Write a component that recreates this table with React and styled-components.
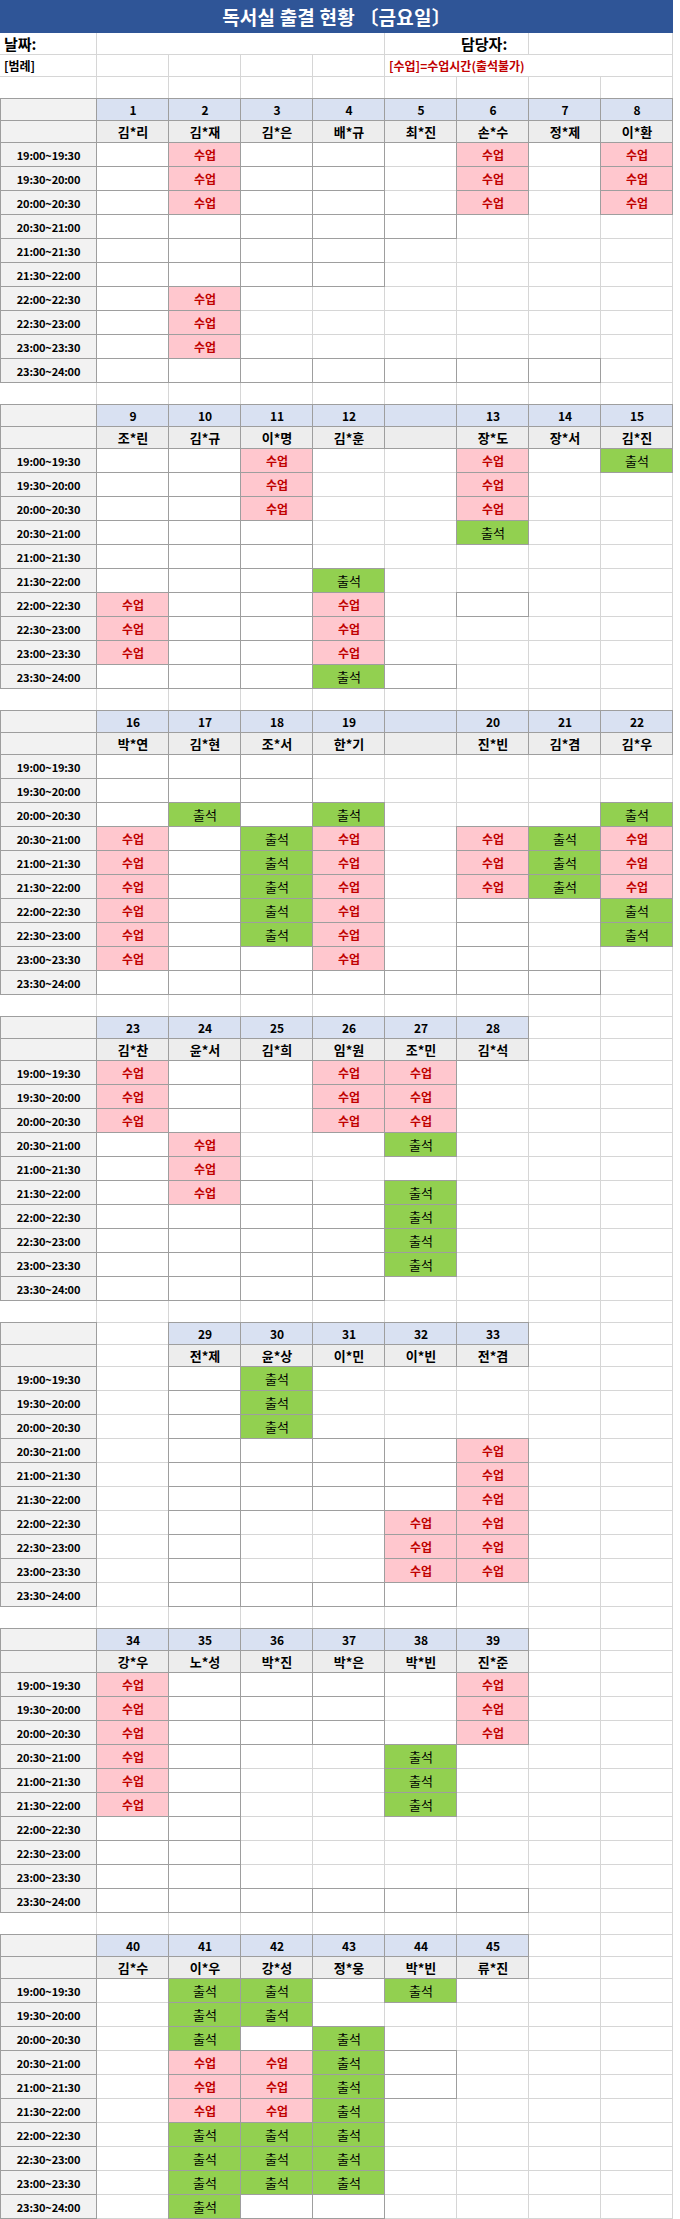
import React from "react";
import styled, { createGlobalStyle } from "styled-components";

const GRID = "#d6d6d6";
const LINE = "#9e9e9e";

const FILLS = {
  white: "#ffffff",
  gray: "#f2f2f2",
  name: "#ededed",
  blue: "#d9e1f2",
  pink: "#ffc7ce",
  green: "#92d050",
};

const TIMES = [
  "19:00~19:30",
  "19:30~20:00",
  "20:00~20:30",
  "20:30~21:00",
  "21:00~21:30",
  "21:30~22:00",
  "22:00~22:30",
  "22:30~23:00",
  "23:00~23:30",
  "23:30~24:00",
];

// rows: . = empty, b = empty with border, s = 수업, c = 출석
const BLOCKS = [
  {
    seats: [[1, "김*리"], [2, "김*재"], [3, "김*은"], [4, "배*규"], [5, "최*진"], [6, "손*수"], [7, "정*제"], [8, "이*환"]],
    rows: ["bsbb.s.s", "bsbb.s.s", "bsbb.s.s", "bbbbb...", "bbbb....", "bbbb....", "bs......", "bs......", "bs......", "bbbbbbb."],
  },
  {
    seats: [[9, "조*린"], [10, "김*규"], [11, "이*명"], [12, "김*훈"], "", [13, "장*도"], [14, "장*서"], [15, "김*진"]],
    rows: ["bbs..s.c", "bbs..s..", "bbs..s..", "bbb..c..", "bbb.....", "bbbc....", "sbbs.b..", "sbbs....", "sbbs....", "bbbcb..."],
  },
  {
    seats: [[16, "박*연"], [17, "김*현"], [18, "조*서"], [19, "한*기"], "", [20, "진*빈"], [21, "김*겸"], [22, "김*우"]],
    rows: ["bbb.....", "bbb.....", "bcbc...c", "sbcs.scs", "sbcs.scs", "sbcs.scs", "sbcs.b.c", "sbcs.b.c", "sbbs.b..", "bbbbbbb."],
  },
  {
    seats: [[23, "김*찬"], [24, "윤*서"], [25, "김*희"], [26, "임*원"], [27, "조*민"], [28, "김*석"], null, null],
    rows: ["sb.ss...", "sb.ss...", "sb.ss...", "bs..c...", "bs......", "bsb.c...", "bbbbc...", "bbbbc...", "bbbbc...", "bbbb...."],
  },
  {
    seats: [null, [29, "전*제"], [30, "윤*상"], [31, "이*민"], [32, "이*빈"], [33, "전*겸"], null, null],
    rows: [".bc.....", ".bc.....", ".bc.....", ".bbbbs..", ".bbbbs..", ".bbbbs..", ".b..ss..", ".b..ss..", ".b..ss..", ".bbbb..."],
  },
  {
    seats: [[34, "강*우"], [35, "노*성"], [36, "박*진"], [37, "박*은"], [38, "박*빈"], [39, "진*준"], null, null],
    rows: ["sbbb.s..", "sbbb.s..", "sbbb.s..", "sb..c...", "sb..c...", "sb..c...", "bb......", "bb......", "bb......", "bbbbbb.."],
  },
  {
    seats: [[40, "김*수"], [41, "이*우"], [42, "강*성"], [43, "정*웅"], [44, "박*빈"], [45, "류*진"], null, null],
    rows: [".cc.c...", ".cc.....", ".c.c....", ".sscb...", ".sscb...", ".ssc....", ".ccc....", ".ccc....", ".ccc....", ".cbb...."],
  },
];

const GlobalStyle = createGlobalStyle`
  body {
    margin: 0;
    background: #ffffff;
    font-family: "Noto Sans CJK KR", "Noto Sans", sans-serif;
    color: #000;
  }
`;

const Sheet = styled.div`
  width: 673px;
  display: grid;
  grid-template-columns: 97px repeat(8, 72px);
`;

const Title = styled.div`
  grid-column: 1 / -1;
  height: 33px;
  background: #2f5597;
  color: #ffffff;
  font-size: 19px;
  font-weight: 700;
  display: flex;
  align-items: center;
  justify-content: center;
  letter-spacing: 0.2px;
`;

const shadow = (p) => {
  const parts = [];
  if (p.$box) {
    parts.push(`inset -1px -1px 0 ${LINE}`, `-1px 0 0 ${LINE}`, `0 -1px 0 ${LINE}`, `-1px -1px 0 ${LINE}`);
  } else {
    parts.push(`inset -1px -1px 0 ${GRID}`);
  }
  if (p.$first) parts.push(`inset 1px 0 0 ${LINE}`);
  return parts.join(", ");
};

const Cell = styled.div`
  grid-column: span ${(p) => p.$span || 1};
  height: ${(p) => (p.$tall ? 24 : 22)}px;
  box-sizing: border-box;
  display: flex;
  align-items: center;
  justify-content: ${(p) => p.$align || "center"};
  padding-left: ${(p) => p.$indent || 0}px;
  padding-bottom: 1px;
  background: ${(p) => FILLS[p.$fill] || FILLS.white};
  box-shadow: ${shadow};
  position: ${(p) => (p.$box ? "relative" : "static")};
  z-index: ${(p) => (p.$box ? 1 : "auto")};
  white-space: nowrap;
`;

const InfoLabel = styled.span`
  font-size: 15px;
  font-weight: 700;
`;

const LegendTag = styled.span`
  font-size: 12px;
  font-weight: 700;
`;

const LegendText = styled.span`
  font-size: 12px;
  font-weight: 700;
  color: #c00000;
`;

const TimeText = styled.span`
  font-size: 11px;
  font-weight: 700;
  letter-spacing: -0.2px;
`;

const SeatNo = styled.span`
  font-size: 12px;
  font-weight: 700;
`;

const SeatName = styled.span`
  font-size: 13px;
  font-weight: 700;
`;

const ClassMark = styled.span`
  font-size: 12px;
  font-weight: 700;
  color: #c00000;
`;

const AttendMark = styled.span`
  font-size: 13px;
  font-weight: 400;
  color: #000;
`;

function BlankRow() {
  return Array.from({ length: 9 }, (_, i) => <Cell key={i} />);
}

function SlotCell({ code }) {
  if (code === "s") {
    return (
      <Cell $tall $box $fill="pink">
        <ClassMark>수업</ClassMark>
      </Cell>
    );
  }
  if (code === "c") {
    return (
      <Cell $tall $box $fill="green">
        <AttendMark>출석</AttendMark>
      </Cell>
    );
  }
  return <Cell $tall $box={code === "b"} />;
}

function Block({ block, withGap }) {
  return (
    <>
      {withGap && <BlankRow />}
      <Cell $box $first $fill="gray" />
      {block.seats.map((seat, i) =>
        seat === null ? (
          <Cell key={i} />
        ) : (
          <Cell key={i} $box $fill="blue">
            {seat !== "" && <SeatNo>{seat[0]}</SeatNo>}
          </Cell>
        )
      )}
      <Cell $box $first $fill="gray" />
      {block.seats.map((seat, i) =>
        seat === null ? (
          <Cell key={i} />
        ) : (
          <Cell key={i} $box $fill="name">
            {seat !== "" && <SeatName>{seat[1]}</SeatName>}
          </Cell>
        )
      )}
      {block.rows.map((row, r) => (
        <React.Fragment key={r}>
          <Cell $tall $box $first $fill="gray">
            <TimeText>{TIMES[r]}</TimeText>
          </Cell>
          {row.split("").map((code, c) => (
            <SlotCell key={c} code={code} />
          ))}
        </React.Fragment>
      ))}
    </>
  );
}

export default function App() {
  return (
    <>
      <GlobalStyle />
      <Sheet>
        <Title>독서실 출결 현황 〔금요일〕</Title>

        <Cell $align="flex-start" $indent={4}>
          <InfoLabel>날짜:</InfoLabel>
        </Cell>
        <Cell $span={4} />
        <Cell $span={2} $align="flex-start" $indent={76}>
          <InfoLabel>담당자:</InfoLabel>
        </Cell>
        <Cell $span={2} />

        <Cell $align="flex-start" $indent={4}>
          <LegendTag>[범례]</LegendTag>
        </Cell>
        <Cell />
        <Cell />
        <Cell />
        <Cell />
        <Cell $span={4} $align="flex-start" $indent={4}>
          <LegendText>[수업]=수업시간(출석불가)</LegendText>
        </Cell>

        <BlankRow />

        {BLOCKS.map((block, i) => (
          <Block key={i} block={block} withGap={i > 0} />
        ))}
      </Sheet>
    </>
  );
}
